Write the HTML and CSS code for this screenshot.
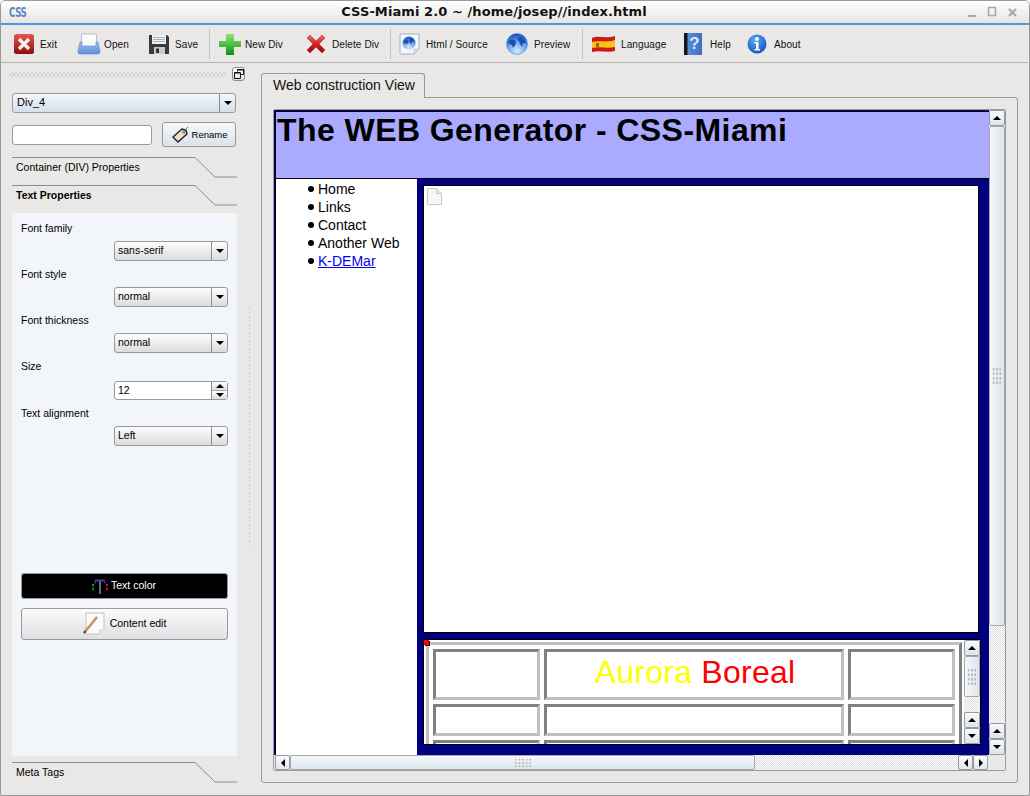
FILE: index.html
```html
<!DOCTYPE html>
<html lang="en">
<head>
<meta charset="utf-8">
<title>CSS-Miami 2.0</title>
<link rel="stylesheet" href="styles.css">
</head>
<body>
<svg class="defs" width="0" height="0" aria-hidden="true">
  <defs>
    <linearGradient id="gRed" x1="0" y1="0" x2="0" y2="1"><stop offset="0" stop-color="#e8564f"/><stop offset="1" stop-color="#8e0f0c"/></linearGradient>
    <linearGradient id="gBlue" x1="0" y1="0" x2="0" y2="1"><stop offset="0" stop-color="#9cbdee"/><stop offset="1" stop-color="#5f90dc"/></linearGradient>
    <linearGradient id="gGreen" x1="0" y1="0" x2="0" y2="1"><stop offset="0" stop-color="#8ee678"/><stop offset="1" stop-color="#0b9416"/></linearGradient>
    <linearGradient id="gX" x1="0" y1="0" x2="0" y2="1"><stop offset="0" stop-color="#ee6a62"/><stop offset=".6" stop-color="#c8181a"/><stop offset="1" stop-color="#a00c0c"/></linearGradient>
    <radialGradient id="gGlobe" cx=".5" cy=".85" r=".8"><stop offset="0" stop-color="#d8ecff"/><stop offset=".55" stop-color="#6aa8f2"/><stop offset="1" stop-color="#1c55c0"/></radialGradient>
    <linearGradient id="gBook" x1="0" y1="0" x2="1" y2="0"><stop offset="0" stop-color="#5f94e0"/><stop offset="1" stop-color="#3c6fc0"/></linearGradient>
    <radialGradient id="gInfo" cx=".4" cy=".3" r=".8"><stop offset="0" stop-color="#5aa8f0"/><stop offset="1" stop-color="#0a50c0"/></radialGradient>
  </defs>
</svg>
<div class="window">
  <header class="titlebar">
    <span class="app-logo">CSS</span>
    <span class="title">CSS-Miami 2.0 ~ /home/josep//index.html</span>
    <span class="win-btns">
      <svg width="60" height="14" viewBox="0 0 60 14"><rect x="1" y="9" width="8" height="2" fill="#a8a8a8"/><rect x="21.500" y="1.500" width="7" height="8" fill="none" stroke="#a8a8a8" stroke-width="1.500"/><path d="M42 3l7 7M49 3l-7 7" stroke="#a8a8a8" stroke-width="2.200"/></svg>
    </span>
  </header>
  <nav class="toolbar">
    <div class="tool w-exit"><svg class="ico" width="22" height="22" viewBox="0 0 22 22"><rect x="1" y="1" width="20" height="20" rx="2.500" fill="url(#gRed)"/><path d="M6 6l10 10M16 6L6 16" stroke="#f4efe8" stroke-width="3.400"/></svg><span>Exit</span></div>
    <div class="tool w-open"><svg class="ico" width="24" height="22" viewBox="0 0 24 22"><rect x="4.500" y="1" width="15" height="13" rx="1" fill="#fbfbfc" stroke="#aab2bd" stroke-width=".8"/><path d="M3 9h2v4h14V9h2l2 9a2.500 2.500 0 0 1-2 3H3a2.500 2.500 0 0 1-2-3z" fill="url(#gBlue)" stroke="#5c8ad0" stroke-width=".6"/></svg><span>Open</span></div>
    <div class="tool w-save"><svg class="ico" width="22" height="22" viewBox="0 0 22 22"><path d="M1 2h18l2 2v17H1z" fill="#3a3a3e"/><rect x="4" y="2" width="14" height="9" fill="#eef0f2"/><path d="M5 4.500h12M5 6.500h12M5 8.500h12" stroke="#a8b4c4"/><rect x="6" y="14" width="11" height="7" fill="#c9c9c9"/><rect x="8" y="15.500" width="3" height="4.500" fill="#333"/></svg><span>Save</span></div>
    <div class="sep"></div>
    <div class="tool w-new"><svg class="ico" width="24" height="22" viewBox="0 0 24 22"><path d="M8 1h8v7h7v6h-7v8H8v-8H1V8h7z" fill="url(#gGreen)"/></svg><span>New Div</span></div>
    <div class="tool w-del"><svg class="ico del-ico" width="20" height="20" viewBox="0 0 20 20"><path d="M1 4l3-3 6 6 6-6 3 3-6 6 6 6-3 3-6-6-6 6-3-3 6-6z" fill="url(#gX)" stroke="#b01a1a" stroke-width=".5"/></svg><span>Delete Div</span></div>
    <div class="sep"></div>
    <div class="tool w-html"><svg class="ico" width="21" height="22" viewBox="0 0 21 22"><path d="M1 1h19v15l-5 5H1z" fill="#f5f7fb" stroke="#9cb0cc"/><circle cx="10" cy="10" r="6.500" fill="url(#gGlobe)"/><path d="M5 8c2-2 3-2 4-1l1 2-2 2-3-1zM11 5c2 0 4 1 4 3l-2 1-1 3-1-2-1-3z" fill="#1c4fae"/><path d="M15 21v-5h5z" fill="#dfe3e8" stroke="#aaa" stroke-width=".5"/></svg><span>Html / Source</span></div>
    <div class="tool w-prev"><svg class="ico" width="22" height="22" viewBox="0 0 22 22"><circle cx="11" cy="11" r="10.500" fill="url(#gGlobe)" stroke="#3f7ed8" stroke-width=".5"/><path d="M2 9c2-3 5-3 7-2l1 3-1 2-2 3-1-3-3-1zM13 4c3 0 6 2 7 6l-3 0-1 4-2-3-1-3-2-1z" fill="#1c4fae"/></svg><span>Preview</span></div>
    <div class="sep"></div>
    <div class="tool w-lang"><svg class="ico" width="25" height="20" viewBox="0 0 25 20"><path d="M1 4c7-3 14 1 23-2v15c-8 2-15-1-23 1z" fill="#cc1b16"/><path d="M1 8c7-2 14 1 23-2v7c-8 2-15-1-23 1z" fill="#f5c518"/><rect x="5" y="9" width="3" height="4" fill="#b4541a"/></svg><span>Language</span></div>
    <div class="tool w-help"><svg class="ico" width="19" height="24" viewBox="0 0 19 24"><rect x="1" y="1" width="18" height="22" fill="url(#gBook)"/><rect x="1" y="1" width="3.500" height="22" fill="#14181e"/><text class="q" x="11.500" y="17" text-anchor="middle">?</text></svg><span>Help</span></div>
    <div class="tool w-about"><svg class="ico" width="20" height="22" viewBox="0 0 20 22"><circle cx="10" cy="11" r="9.500" fill="url(#gInfo)"/><circle cx="10" cy="6" r="2" fill="#fff"/><path d="M7.500 9h4v7h1.500v1.500H7.500V16H9v-5.500H7.500z" fill="#fff"/></svg><span>About</span></div>
  </nav>
  <main class="main">
    <aside class="left">
      <div class="dock-head"><div class="grip-h"></div><div class="float-btn"><svg width="10" height="10" viewBox="0 0 10 10"><path d="M3.500 2.500V.5h6v5h-3M.5 3.500h6v6h-6z" fill="none" stroke="#111"/><path d="M3 1h6M1 4h5" stroke="#111" stroke-width="1"/></svg></div></div>
      <div class="combo combo-blue"><span class="combo-text">Div_4</span><span class="combo-arrow"><i class="tri-down"></i></span></div>
      <div class="rename-row">
        <div class="text-input"></div>
        <div class="btn-rename">
          <svg width="18" height="17" viewBox="0 0 18 17"><path d="M1 11l9-8 4 1 1 4-9 8z" fill="#eadfca" stroke="#222" stroke-width="1.400"/><circle cx="12" cy="6" r="1.200" fill="#fff" stroke="#222" stroke-width=".7"/><path d="M13 4l3-3" stroke="#777"/></svg>
          <span>Rename</span>
        </div>
      </div>
      <div class="sec sec-first">
        <svg class="sec-line" width="225" height="21" viewBox="0 0 225 21"><path d="M0 .5h183l20 19.500h22" fill="none" stroke="#8e8e8e"/></svg>
        <span>Container (DIV) Properties</span>
      </div>
      <div class="sec sec-next sec-bold">
        <svg class="sec-line" width="225" height="21" viewBox="0 0 225 21"><path d="M0 .5h183l20 19.500h22" fill="none" stroke="#8e8e8e"/></svg>
        <span>Text Properties</span>
      </div>
      <section class="panel">
        <label class="lbl lbl-first">Font family</label>
        <div class="combo field"><span class="combo-text">sans-serif</span><span class="combo-arrow"><i class="tri-down"></i></span></div>
        <label class="lbl">Font style</label>
        <div class="combo field"><span class="combo-text">normal</span><span class="combo-arrow"><i class="tri-down"></i></span></div>
        <label class="lbl">Font thickness</label>
        <div class="combo field"><span class="combo-text">normal</span><span class="combo-arrow"><i class="tri-down"></i></span></div>
        <label class="lbl">Size</label>
        <div class="spin field"><span class="spin-text">12</span><span class="spin-btns"><span><i class="tri-up"></i></span><span><i class="tri-down"></i></span></span></div>
        <label class="lbl">Text alignment</label>
        <div class="combo field"><span class="combo-text">Left</span><span class="combo-arrow"><i class="tri-down"></i></span></div>
        <div class="btn-color">
          <svg width="18" height="16" viewBox="0 0 18 16"><path d="M4 2.500h10" stroke="#4a3aa0" stroke-width="2"/><path d="M4 3.500v2M14 3.500v2" stroke="#5a2aa0" stroke-width="1.500"/><path d="M9 3v13" stroke="#666" stroke-width="2"/><path d="M2 6v2" stroke="#1a9a1a" stroke-width="2"/><path d="M2 9.500v2.500" stroke="#0a8a0a" stroke-width="2"/><path d="M16 6v2" stroke="#9a1a9a" stroke-width="2"/><path d="M16 9.500v2.500" stroke="#d01010" stroke-width="2"/></svg>
          <span>Text color</span>
        </div>
        <div class="btn-content">
          <svg width="22" height="24" viewBox="0 0 22 24"><path d="M3 1h18v16l-5 5H3z" fill="#fafafa" stroke="#c4c4c4"/><path d="M16 22v-5h5z" fill="#e2e2e2"/><path d="M1 21L14 5" stroke="#b5985a" stroke-width="2.400"/><path d="M1 21l1.500-1.800" stroke="#444" stroke-width="2"/></svg>
          <span>Content edit</span>
        </div>
      </section>
      <div class="sec sec-meta">
        <svg class="sec-line" width="225" height="21" viewBox="0 0 225 21"><path d="M0 .5h183l20 19.500h22" fill="none" stroke="#8e8e8e"/></svg>
        <span>Meta Tags</span>
      </div>
    </aside>
    <div class="splitter"><div class="grip-v"></div></div>
    <div class="right">
      <div class="tab">Web construction View</div>
      <div class="pane">
        <div class="scroll-area">
          <div class="scroll-top">
            <div class="webview">
              <div class="web-header"><h1>The WEB Generator - CSS-Miami</h1></div>
              <div class="web-body">
                <ul class="web-nav">
                  <li>Home</li><li>Links</li><li>Contact</li><li>Another Web</li><li><a href="#">K-DEMar</a></li>
                </ul>
                <div class="web-main">
                  <div class="frame-a">
                    <svg class="page-ico" width="15" height="17" viewBox="0 0 15 17"><path d="M.5.500h9l5 5v11H.5z" fill="#f7f7f7" stroke="#c8c8c8"/><path d="M9.500.5v5h5" fill="#e8e8e8" stroke="#c8c8c8"/></svg>
                  </div>
                  <div class="frame-b">
                    <i class="red-dot"></i>
                    <div class="table-wrap">
                      <table class="aurora">
                        <colgroup><col class="c1"><col class="c2"><col class="c3"></colgroup>
                        <tr class="r1"><td></td><td class="big"><span class="yellow">Aurora</span> <span class="red">Boreal</span></td><td></td></tr>
                        <tr class="r2"><td></td><td></td><td></td></tr>
                        <tr class="r3"><td></td><td></td><td></td></tr>
                      </table>
                    </div>
                    <div class="vbar vbar-inner">
                      <span class="sb-btn"><i class="tri-up"></i></span>
                      <span class="sb-slider sb-slider-v short"><i class="dots"></i></span>
                      <span class="sb-track"></span>
                      <span class="sb-btn"><i class="tri-up"></i></span>
                      <span class="sb-btn"><i class="tri-down"></i></span>
                    </div>
                  </div>
                </div>
              </div>
            </div>
            <div class="vbar vbar-outer">
              <span class="sb-btn"><i class="tri-up"></i></span>
              <span class="sb-slider sb-slider-v long"><i class="dots"></i></span>
              <span class="sb-track"></span>
              <span class="sb-btn"><i class="tri-up"></i></span>
              <span class="sb-btn"><i class="tri-down"></i></span>
            </div>
          </div>
          <div class="hbar">
            <span class="sb-btn sb-btn-h"><i class="tri-left"></i></span>
            <span class="sb-slider sb-slider-h"><i class="dots dots-h"></i></span>
            <span class="sb-track"></span>
            <span class="sb-btn sb-btn-h"><i class="tri-left"></i></span>
            <span class="sb-btn sb-btn-h"><i class="tri-right"></i></span>
            <span class="corner"></span>
          </div>
        </div>
      </div>
    </div>
  </main>
</div>
</body>
</html>
```

FILE: styles.css
```css
* { box-sizing: border-box; }
html, body { margin: 0; padding: 0; background: #fff; }
body { font-family: "Liberation Sans", Arial, sans-serif; color: #000; }
.defs { position: absolute; }
.window {
  width: 1030px; height: 796px; background: #e9e8e6;
  border: 1px solid #9a9a98; border-radius: 5px 5px 0 0;
  display: flex; flex-direction: column; overflow: hidden;
}
.titlebar {
  height: 24px; flex: none; display: flex; align-items: center; position: relative;
  background: linear-gradient(#ffffff, #e6e5e3);
  border-bottom: 2px solid #4f94e6;
}
.app-logo {
  margin-left: 8px; width: 18px; font: bold 12px/14px "DejaVu Sans", sans-serif;
  color: #5c86c4; letter-spacing: -.5px; transform: scale(.72, 1.200); transform-origin: left center;
}
.title {
  position: absolute; left: 0; right: 0; text-align: center; letter-spacing: .08px;
  font: bold 13px/20px "DejaVu Sans", sans-serif; color: #111; padding-right: 42px;
}
.win-btns { margin-left: auto; height: 14px; padding-right: 2px; margin-top: 1px; }
.toolbar {
  height: 38px; flex: none; display: flex; align-items: center;
  padding-left: 12px; margin-right: 1px;
  border-bottom: 1px solid #b4b3b1;
}
.tool { display: flex; align-items: center; height: 30px; font-size: 10px; letter-spacing: .1px; color: #111; flex: none; }
.tool span { padding-top: 1px; }
.ico { width: auto; flex: none; }
.w-exit { width: 64px; } .w-exit span { margin-left: 5px; }
.w-open { width: 71px; } .w-open span { margin-left: 3px; }
.w-save { width: 61px; } .w-save span { margin-left: 5px; }
.w-new { width: 88px; } .w-new span { margin-left: 3px; }
.w-del { width: 84px; } .w-del span { margin-left: 6px; }
.w-html { width: 107px; } .w-html span { margin-left: 6px; }
.w-prev { width: 76px; } .w-prev span { margin-left: 6px; }
.w-lang { width: 92px; } .w-lang span { margin-left: 5px; }
.w-help { width: 64px; } .w-help span { margin-left: 8px; }
.w-about span { margin-left: 7px; }
.sep { width: 1px; height: 30px; background: #c0bfbd; margin-right: 8px; flex: none; }
.q { font: bold 17px "Liberation Sans", sans-serif; fill: #dce8fa; }

.main { flex: 1; display: flex; min-height: 0; }
.left { width: 240px; flex: none; padding-left: 11px; padding-top: 4px; }
.dock-head { display: flex; align-items: center; height: 14px; margin-left: -3px; width: 236px; }
.grip-h {
  width: 217px; height: 5px; margin-right: 6px;
  background-image: repeating-conic-gradient(#d2d2d0 0 25%, #e9e8e6 0 50%);
  background-size: 4px 4px;
}
.float-btn {
  width: 13px; height: 14px; border: 1px solid #8c8c8c; border-radius: 3px;
  background: linear-gradient(#fff, #dfdfdf); display: flex; align-items: center; justify-content: center;
}
.combo {
  display: flex; height: 20px; border: 1px solid #999; border-radius: 3px;
  background: linear-gradient(#fdfdfd, #dcdcdc); font-size: 10.500px;
}
.combo-blue { width: 224px; margin-top: 12px; background: linear-gradient(#f2f6fa, #d4e0ea); font-size: 11px; }
.combo-text { flex: 1; padding-left: 3px; line-height: 17px; }
.combo-blue .combo-text { padding-left: 4px; }
.combo-arrow { width: 16px; border-left: 1px solid #8e8e8e; display: flex; align-items: center; justify-content: center; }
.tri-down, .tri-up, .tri-left, .tri-right { display: block; width: 0; height: 0; border-style: solid; border-color: transparent; }
.tri-down { border-width: 4px 4px 0 4px; border-top-color: #000; }
.tri-up { border-width: 0 4px 4px 4px; border-bottom-color: #000; }
.tri-left { border-width: 4px 4px 4px 0; border-right-color: #000; }
.tri-right { border-width: 4px 0 4px 4px; border-left-color: #000; }
.rename-row { display: flex; align-items: center; width: 224px; margin-top: 9px; justify-content: space-between; }
.text-input { width: 140px; height: 20px; background: #fff; border: 1px solid #9a9a9a; border-radius: 3px; }
.btn-rename {
  width: 74px; height: 25px; border: 1px solid #999; border-radius: 3px;
  background: linear-gradient(#f6f8fa, #d8e2ea); display: flex; align-items: center; justify-content: center;
  font-size: 9.500px; gap: 2px; padding-left: 1px;
}
.sec { position: relative; width: 225px; height: 21px; font-size: 10.500px; padding: 3px 0 0 4px; line-height: 14px; }
.sec span { position: relative; }
.sec-line { position: absolute; left: 0; top: 0; }
.sec-first { margin-top: 10px; }
.sec-next { margin-top: 7px; }
.sec-bold { font-weight: bold; }
.sec-meta { margin-top: 6px; }
.panel { width: 225px; height: 543px; margin-top: 7px; background: #f2f6fa; padding: 7px 9px 0; display: flex; flex-direction: column; }
.lbl { display: block; height: 16px; line-height: 16px; font-size: 10.500px; margin-top: 5px; }
.lbl-first { margin-top: 0; }
.field { width: 114px; align-self: flex-end; margin-top: 5px; }
.spin {
  display: flex; height: 19px; margin-top: 7px; border: 1px solid #999; border-radius: 3px; background: #fff; font-size: 10.500px;
}
.spin-text { flex: 1; padding-left: 3px; line-height: 16px; }
.spin-btns { width: 16px; border-left: 1px solid #8e8e8e; display: flex; flex-direction: column; }
.spin-btns span { flex: 1; display: flex; align-items: center; justify-content: center; background: linear-gradient(#fdfdfd, #dedede); }
.spin-btns span + span { border-top: 1px solid #aaa; }
.btn-color {
  margin-top: 127px; height: 26px; background: #000; color: #fff; border: 1px solid #999; border-radius: 3px;
  display: flex; align-items: center; justify-content: center; font-size: 10.500px; gap: 2px; flex: none;
  padding: 0 2px 2px 0;
}
.btn-color svg { margin-top: 1px; }
.btn-content {
  margin-top: 9px; height: 32px; border: 1px solid #999; border-radius: 3px;
  background: linear-gradient(#fbfbfb, #dfe0e2); display: flex; align-items: center; justify-content: center; font-size: 10.500px; gap: 5px; flex: none;
  padding: 0 0 2px 0;
}
.btn-content svg { margin-top: 2px; }
.splitter { width: 20px; flex: none; position: relative; display: flex; }
.grip-v {
  width: 3px; height: 238px; margin: 244px 0 0 7px;
  background-image: radial-gradient(circle, #c8c8c6 1px, transparent 1.100px);
  background-size: 3px 4px;
}
.right { flex: 1; min-width: 0; padding: 10px 11px 12px 0; display: flex; flex-direction: column; }
.tab {
  width: 164px; height: 25px; margin-bottom: -1px; position: relative; z-index: 1;
  border: 1px solid #9a9a9a; border-bottom: 0; border-radius: 3px 3px 0 0; background: #e9e8e6;
  font-size: 14px; line-height: 22px; padding-left: 11px; color: #111;
}
.pane { flex: 1; border: 1px solid #9a9a9a; border-radius: 0 3px 3px 3px; padding: 11px; min-height: 0; }
.scroll-area { height: 662px; border: 1px solid #9a9a9a; border-radius: 2px; display: flex; flex-direction: column; background: #e9e8e6; }
.scroll-top { display: flex; height: 645px; flex: none; }
.webview {
  width: 715px; height: 645px; overflow: hidden; flex: none; background: #000080;
  border-top: 1px solid #000080; border-left: 1px solid #000080;
  display: flex; flex-direction: column;
}
.web-header {
  height: 68px; flex: none; background: #aaaaff; border-top: 1px solid #000; border-left: 1px solid #000;
  border-bottom: 1px solid #000;
}
h1 { margin: 0; font: bold 32px/37px "Liberation Sans", Arial, sans-serif; padding-left: 1px; letter-spacing: .43px; }
.web-body { flex: 1; display: flex; min-height: 0; }
.web-nav {
  width: 142px; flex: none; margin: 0; padding: 1px 0 0 32px; background: #fff; border-left: 1px solid #000;
  font-size: 14px; line-height: 18px; list-style: none;
}
.web-nav li { display: flex; align-items: center; gap: 4px; }
.web-nav li::before { content: ""; width: 6px; height: 6px; border-radius: 50%; background: #000; flex: none; }
.web-nav a { color: #0000ee; }
.web-main { flex: 1; min-width: 0; padding: 6px 0 0 6px; }
.frame-a { width: 556px; height: 448px; background: #fff; border: 1px solid #000; padding: 2px 0 0 3px; }
.page-ico { display: block; }
.frame-b {
  position: relative; width: 558px; height: 106px; margin-top: 6px; background: #fff; border: 1px solid #000; display: flex;
}
.red-dot { position: absolute; left: 0; top: 0; width: 5px; height: 5px; background: #f00; box-shadow: 1px 1px 0 #000; z-index: 2; }
.table-wrap { width: 540px; height: 104px; overflow: hidden; flex: none; padding: 2px 0 0 2px; }
.aurora {
  width: 536px; table-layout: fixed; border-collapse: separate; border-spacing: 4px;
  border: 3px solid; border-color: #c0c0c0 #808080 #808080 #c0c0c0;
}
.c1, .c3 { width: 107px; }
.aurora td { padding: 0; border: 3px solid; border-color: #808080 #c0c0c0 #c0c0c0 #808080; background: #fff; text-align: center; }
.r1 td { height: 51px; }
.r2 td { height: 32px; }
.r3 td { height: 32px; }
.aurora .big { font-size: 32px; line-height: 37px; letter-spacing: .25px; padding-bottom: 4px; padding-left: 2px; }
.yellow { color: #ffff00; }
.red { color: #ff0000; }
.vbar {
  width: 16px; flex: none; display: flex; flex-direction: column;
  background-color: #f2f2f0;
}
.sb-btn {
  display: flex; align-items: center; justify-content: center; flex: none;
  height: 16px; border: 1px solid #9a9a9a; border-radius: 2px;
  background: linear-gradient(#f8fafc, #dbe4ec);
}
.sb-btn-h { width: 15px; height: 15px; background: linear-gradient(#fafbfc, #dfe6ee); }
.sb-slider {
  display: flex; align-items: center; justify-content: center; flex: none;
  background: linear-gradient(90deg, #f6f8fa, #dce5ee); border: 1px solid #a8a8a8; border-radius: 2px;
}
.sb-slider-v.long { height: 500px; }
.sb-slider-v.short { height: 41px; }
.sb-slider-h { width: 465px; height: 15px; background: linear-gradient(#f6f8fa, #dce5ee); }
.sb-track {
  flex: 1; min-width: 0; min-height: 0;
  background-color: #fff;
  background-image: repeating-conic-gradient(#dcdcdc 0 25%, #fff 0 50%);
  background-size: 2px 2px;
}
.dots {
  display: block; width: 10px; height: 18px;
  background-image: radial-gradient(circle, #b8b8b8 1px, transparent 1.100px);
  background-size: 3.300px 4.500px;
}
.dots-h { width: 18px; height: 10px; background-size: 3.600px 3.300px; }
.vbar-outer { width: 16px; }
.vbar-inner { width: 16px; }
.hbar { display: flex; height: 15px; flex: none; padding-left: 1px; }
.hbar .sb-track { flex: 1; }
.corner { width: 17px; flex: none; background: #e9e8e6; }
```
